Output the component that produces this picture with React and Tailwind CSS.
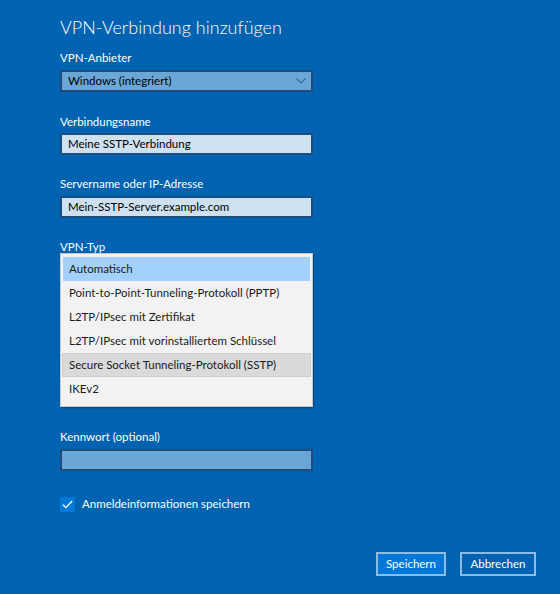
import React from "react";

function Label({ children, className = "" }) {
  return <div className={`text-[11.5px] leading-[16px] text-white ${className}`}>{children}</div>;
}

export default function App() {
  const items = [
    { t: "Automatisch", cls: "bg-[#a3d1fb] mx-[2px]" },
    { t: "Point-to-Point-Tunneling-Protokoll (PPTP)", cls: "mx-[2px]" },
    { t: "L2TP/IPsec mit Zertifikat", cls: "mx-[2px]" },
    { t: "L2TP/IPsec mit vorinstalliertem Schlüssel", cls: "mx-[2px]" },
    { t: "Secure Socket Tunneling-Protokoll (SSTP)", cls: "bg-[#dadada] border border-[#cfcfcf] mx-[1px]" },
    { t: "IKEv2", cls: "mx-[2px]" },
  ];
  return (
    <div
      className="w-[560px] h-[594px] bg-[#0063b1] text-white flex flex-col relative overflow-hidden"
      style={{ fontFamily: 'Lato, "Noto Sans", sans-serif' }}
    >
      <div className="pl-[60px] pt-[14px] w-[313px] flex flex-col">
        <div className="text-[18px] leading-[26px] font-light">VPN-Verbindung hinzufügen</div>

        <Label className="mt-[10px]">VPN-Anbieter</Label>
        <div className="mt-[4px] h-[22px] bg-[#6aa6d6] border-2 border-[#1e4d7d] flex items-center justify-between pl-[6px] pr-[5px] text-[11.5px] text-black">
          <span>Windows (integriert)</span>
          <svg width="10" height="6" viewBox="0 0 10 6" fill="none">
            <path d="M0.5 0.5 L5 5 L9.5 0.5" stroke="#3a6990" strokeWidth="1.2" />
          </svg>
        </div>

        <Label className="mt-[22px]">Verbindungsname</Label>
        <div className="mt-[3px] h-[22px] bg-[#cde1f1] border-2 border-[#1e4d7d] flex items-center pl-[6px] text-[11.5px] text-black">
          Meine SSTP-Verbindung
        </div>

        <Label className="mt-[21px]">Servername oder IP-Adresse</Label>
        <div className="mt-[4px] h-[22px] bg-[#cde1f1] border-2 border-[#1e4d7d] flex items-center pl-[6px] text-[11.5px] text-black">
          Mein-SSTP-Server.example.com
        </div>

        <Label className="mt-[21px]">VPN-Typ</Label>
        <div className="relative h-[0px]">
          <div className="absolute left-0 top-[-2px] w-[253px] bg-[#f2f2f2] border border-[#c8c8c8] shadow-[1px_1px_2px_rgba(0,0,0,0.35)] pt-[3px] pb-[5px] flex flex-col">
            {items.map((it) => (
              <div key={it.t} className={`h-[24px] flex items-center pl-[6px] text-[11.5px] text-[#1a1a1a] ${it.cls}`}>
                {it.t}
              </div>
            ))}
          </div>
        </div>

        <Label className="mt-[174px]">Kennwort (optional)</Label>
        <div className="mt-[4px] h-[22px] bg-[#6aa6d6] border-2 border-[#1e4d7d]" />

        <div className="mt-[25px] h-[16px] flex items-center gap-[7px]">
          <div className="w-[15px] h-[15px] bg-[#0078d7] flex items-center justify-center">
            <svg width="11" height="9" viewBox="0 0 11 9" fill="none">
              <path d="M0.8 4.6 L3.8 7.6 L10.2 1" stroke="white" strokeWidth="1.3" />
            </svg>
          </div>
          <span className="text-[11.5px] leading-[16px]">Anmeldeinformationen speichern</span>
        </div>
      </div>

      <div className="mt-[40px] flex justify-end gap-[14px] pr-[24px]">
        <button className="w-[70px] h-[24px] bg-[#0078d7] border-2 border-[#8bbde6] text-[11.5px] leading-[16px] text-white flex items-center justify-center">
          Speichern
        </button>
        <button className="w-[76px] h-[24px] bg-[#0063b1] border-2 border-[#8bbde6] text-[11.5px] leading-[16px] text-white flex items-center justify-center">
          Abbrechen
        </button>
      </div>
    </div>
  );
}
